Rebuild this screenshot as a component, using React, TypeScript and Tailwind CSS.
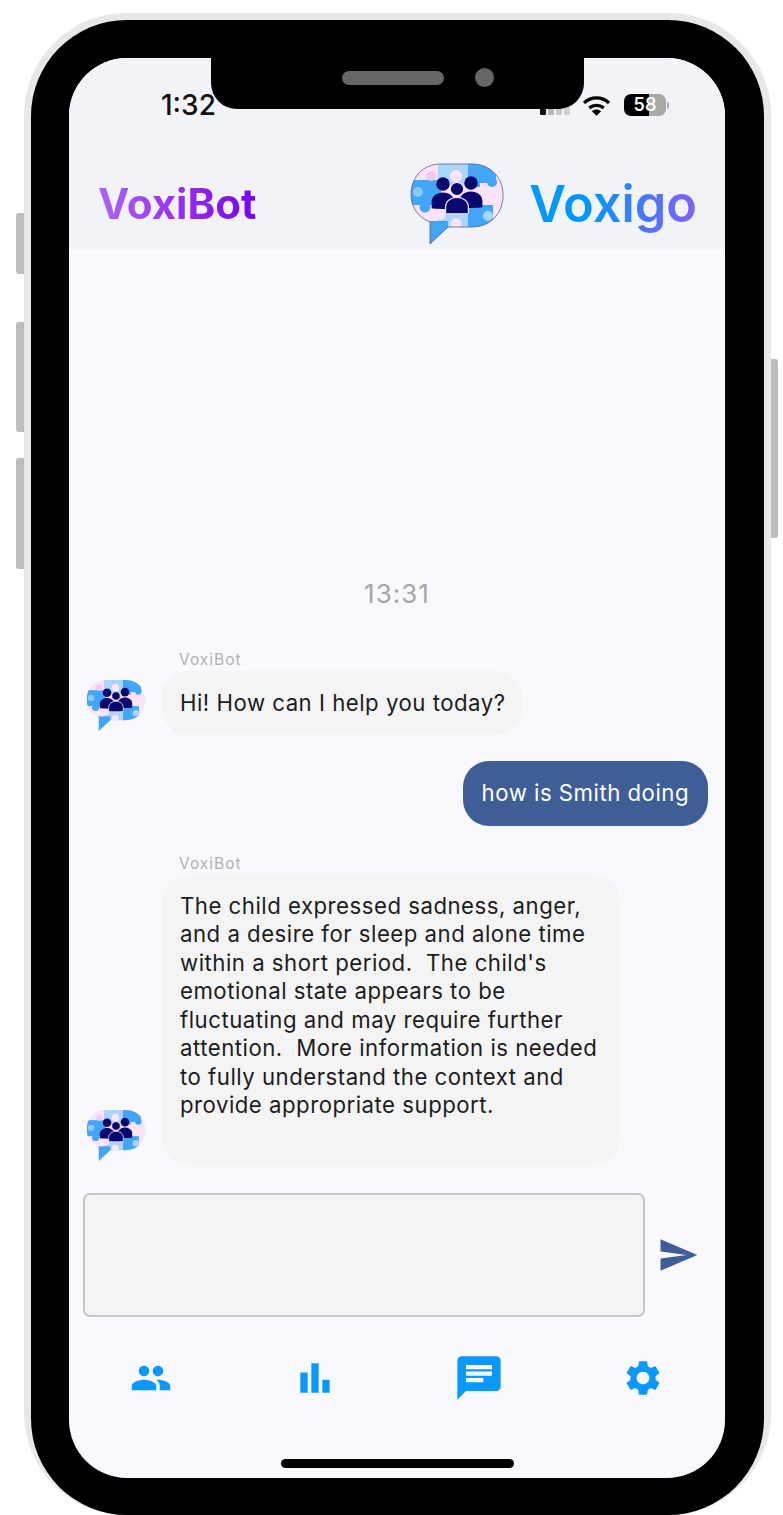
import React, { useId } from "react";
import { MdBarChart, MdChat, MdPeople, MdSend, MdSettings } from "react-icons/md";

const BUBBLE =
  "M31 1H62C80 1 93 14 93 32C93 51 80 64 62 64H38L20 81V59C8 54 1 44 1 32C1 14 13 1 31 1Z";

function Person({ x, y, scale = 1 }: { x: number; y: number; scale?: number }) {
  return (
    <g transform={`translate(${x} ${y}) scale(${scale})`} fill="#08086f">
      <circle cx="0" cy="0" r="5.6" />
      <path d="M-9.5 20V15C-9.5 10 -5 7 0 7C5 7 9.5 10 9.5 15V20C9.5 21 -9.5 21 -9.5 20Z" />
    </g>
  );
}

function Logo({ className, outline = false }: { className: string; outline?: boolean }) {
  const id = useId();
  return (
    <svg viewBox="0 0 94 82" className={className}>
      <clipPath id={id}>
        <path d={BUBBLE} />
      </clipPath>
      <g clipPath={`url(#${id})`}>
        <rect width="94" height="82" fill="#fbe3f9" />
        <rect x="28" y="0" width="30" height="22" fill="#aad6fb" />
        <rect x="58" y="0" width="28" height="24" fill="#42a5f5" />
        <rect x="0" y="17" width="31" height="25" fill="#42a5f5" />
        <rect x="70" y="20" width="24" height="22" fill="#fbe3f9" />
        <rect x="28" y="45" width="30" height="20" fill="#aad6fb" />
        <rect x="58" y="42" width="25" height="23" fill="#42a5f5" />
        <rect x="16" y="58" width="22" height="24" fill="#42a5f5" />
        <circle cx="21" cy="13" r="5" fill="#f6c6f3" />
        <circle cx="46" cy="13" r="6" fill="#fbe3f9" />
        <circle cx="8" cy="29" r="5" fill="#8fc8f8" />
        <circle cx="82" cy="19" r="5" fill="#42a5f5" />
        <circle cx="30" cy="51" r="6" fill="#fbe3f9" />
        <circle cx="46" cy="61" r="5.5" fill="#fbe3f9" />
        <circle cx="78" cy="53" r="5" fill="#aad6fb" />
        <circle cx="15" cy="44" r="5.5" fill="#42a5f5" />
      </g>
      {outline && <path d={BUBBLE} fill="none" stroke="#5a5a8a" strokeWidth="0.8" />}
      <Person x={33} y={21} scale={1.2} />
      <Person x={61} y={20} scale={1.2} />
      <g stroke="#fbe3f9" strokeWidth="1">
        <Person x={47} y={26} scale={1.2} />
      </g>
    </svg>
  );
}

function StatusBar() {
  return (
    <div className="flex h-[38px] items-center justify-between pl-[92px] pr-[56px]">
      <span className="text-[28px] font-medium leading-none text-[#111]">1:32</span>
      <div className="flex items-center">
        <div className="mr-[12px] flex items-end gap-[2px] pt-[4px]">
          <span className="h-[7px] w-[6px] rounded-[1px] bg-[#111]" />
          <span className="h-[10px] w-[6px] rounded-[1px] bg-[#b8b8b8]" />
          <span className="h-[13px] w-[6px] rounded-[1px] bg-[#c8c8c8]" />
          <span className="h-[16px] w-[6px] rounded-[1px] bg-[#d0d0d0]" />
        </div>
        <svg viewBox="0 0 28 20" className="mr-[13px] h-[21px] w-[29px]" fill="none" stroke="#000" strokeWidth="3.2">
          <path d="M2 7.5C9 1 19 1 26 7.5" />
          <path d="M7 12.5C11 9 17 9 21 12.5" />
          <path d="M14 20L9.5 15.5C12 13.4 16 13.4 18.5 15.5Z" fill="#000" stroke="none" />
        </svg>
        <div className="flex h-[22px] w-[42px] items-center justify-center rounded-[7px] bg-[linear-gradient(90deg,#000_60%,#a8a8a8_60%)] text-[18px] font-semibold leading-none text-white">
          58
        </div>
        <span className="ml-[1px] h-[7px] w-[2px] rounded-r-sm bg-[#b0b0b0]" />
      </div>
    </div>
  );
}

function BotMessage({ children, box }: { children: string; box: string }) {
  return (
    <div className="flex items-end pl-[17px]">
      <Logo className="mb-[3px] h-[53px] w-[60px] shrink-0" />
      <div className="ml-[16px]">
        <div className="mb-[2px] pl-[17px] text-[15.5px] leading-[19px] tracking-[1px] text-[#b0b0b0]">VoxiBot</div>
        <div className={`rounded-[26px] bg-[#f4f4f5] pl-[18px] pr-[16px] text-[22.2px] leading-[28.5px] tracking-[0.5px] text-[#1c1c1c] whitespace-pre-wrap ${box}`}>
          {children}
        </div>
      </div>
    </div>
  );
}

export default function App() {
  return (
    <div className="relative h-[1515px] w-[783px] overflow-hidden bg-white pl-[24px] pt-[13px] font-['Inter',sans-serif]">
      {/* hardware buttons */}
      <div className="absolute left-[16px] top-[213px] h-[61px] w-[8px] rounded-l-[3px] bg-[#bdbdbd]" />
      <div className="absolute left-[16px] top-[322px] h-[110px] w-[8px] rounded-l-[3px] bg-[#bdbdbd]" />
      <div className="absolute left-[16px] top-[458px] h-[111px] w-[8px] rounded-l-[3px] bg-[#bdbdbd]" />
      <div className="absolute left-[771px] top-[359px] h-[179px] w-[7px] rounded-r-[3px] bg-[#bdbdbd]" />

      <div className="h-[1502px] w-[747px] rounded-[102px] bg-[#e8e8e8] p-[7px]">
        <div className="h-[1495px] w-[733px] rounded-[96px] bg-black px-[38px] pt-[38px]">
          <div className="relative flex h-[1420px] w-[656px] flex-col overflow-hidden rounded-[58px] bg-[#f8f8fd]">
            {/* notch */}
            <div className="absolute left-[142px] top-0 flex h-[51px] w-[373px] items-center justify-center rounded-b-[26px] bg-black pb-[12px]">
              <span className="ml-[40px] h-[14px] w-[102px] rounded-full bg-[#666]" />
              <span className="ml-[31px] h-[19px] w-[19px] rounded-full bg-[#666]" />
            </div>

            <header className="h-[191px] shrink-0 bg-[#f2f3f7] pt-[28px]">
              <StatusBar />
              <div className="mt-[39px] flex items-center pl-[29px] pr-[28px]">
                <span className="bg-[linear-gradient(90deg,#ad63f7,#7d00ee)] bg-clip-text text-[42px] font-bold leading-[46px] text-transparent">
                  VoxiBot
                </span>
                <Logo className="ml-auto h-[82px] w-[94px]" outline />
                <span className="ml-[25px] bg-[linear-gradient(100deg,#0097ff_35%,#8b5cf6)] bg-clip-text text-[50.5px] font-semibold leading-[62px] text-transparent">
                  Voxigo
                </span>
              </div>
            </header>

            <main className="flex flex-1 flex-col justify-end">
              <div className="mb-[41px] text-center text-[26px] leading-[30px] tracking-[1px] text-[#a6a6a6]">13:31</div>
              <BotMessage box="w-[360px] py-[18px]">Hi! How can I help you today?</BotMessage>
              <div className="mr-[17px] mt-[26px] self-end rounded-[26px] bg-[#3f5e96] px-[19px] py-[18px] text-[22.2px] leading-[28.5px] tracking-[0.5px] text-white">
                how is Smith doing
              </div>
              <div className="mt-[28px]">
                <BotMessage box="w-[458px] py-[17px]">
                  {"The child expressed sadness, anger, and a desire for sleep and alone time within a short period.  The child's emotional state appears to be fluctuating and may require further attention.  More information is needed to fully understand the context and provide appropriate support.\n "}
                </BotMessage>
              </div>
              <div className="mt-[28px] flex items-center pl-[14px]">
                <div className="h-[124px] w-[562px] rounded-[7px] border-2 border-[#c6c6c6] bg-[#f4f4f5]" />
                <MdSend className="ml-[12px] h-[42px] w-[42px] text-[#3f5e96]" />
              </div>
            </main>

            <nav className="h-[161px] shrink-0 text-[#0a98ff]">
              <div className="grid h-[142px] grid-cols-4 items-center justify-items-center pb-[20px]">
                <MdPeople className="h-[42px] w-[42px]" />
                <MdBarChart className="h-[44px] w-[44px]" />
                <MdChat className="h-[52px] w-[52px]" />
                <MdSettings className="h-[42px] w-[42px]" />
              </div>
              <div className="mx-auto h-[9px] w-[233px] rounded-full bg-black" />
            </nav>
          </div>
        </div>
      </div>
    </div>
  );
}
